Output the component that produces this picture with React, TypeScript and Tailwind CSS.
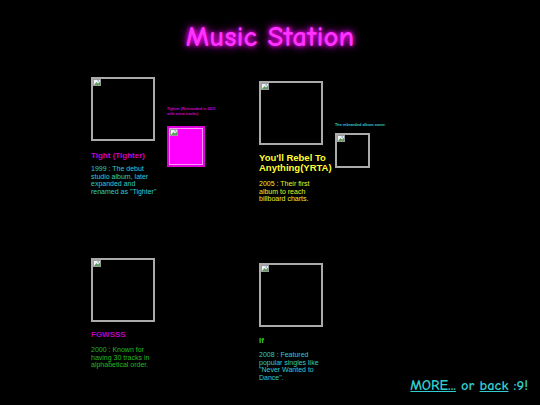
import React from "react";

const comic = { fontFamily: '"Comic Sans MS", "Comic Neue", cursive' };

function Broken() {
  return (
    <svg width="8" height="7" viewBox="0 0 8 7" className="absolute left-0 top-0">
      <rect x="0.5" y="0.5" width="7" height="6" fill="#f2f2f2" stroke="#9a9a9a" strokeWidth="1" />
      <path d="M1 6 L3.5 3 L5 4.5 L7 2.5 L7 6 Z" fill="#5aa05a" />
      <rect x="4.5" y="1.2" width="1.6" height="1.4" fill="#7aa8d8" />
    </svg>
  );
}

function Cover({ size }: { size: string }) {
  return (
    <div className={`relative border-2 border-[#ababab] bg-black ${size}`}>
      <Broken />
    </div>
  );
}

type Album = {
  title: string;
  titleClass: string;
  desc: string;
  descClass: string;
  gapClass: string;
  descGapClass: string;
};

function AlbumCol({ a }: { a: Album }) {
  return (
    <div className="w-[70px] shrink-0">
      <Cover size="h-[64px] w-[64px]" />
      <h3 className={`font-bold ${a.titleClass} ${a.gapClass}`}>{a.title}</h3>
      <p className={`text-[7px] leading-[7.7px] ${a.descClass} ${a.descGapClass}`}>{a.desc}</p>
    </div>
  );
}

export default function App() {
  return (
    <div
      className="min-h-[405px] w-[540px] bg-black"
      style={{ fontFamily: '"Liberation Sans", Arial, sans-serif' }}
    >
      <h1
        className="pt-[21px] text-center text-[29px] font-bold leading-[32px] text-[#ff33ff] [text-shadow:0_0_4px_#ff00ff,0_0_10px_#ff00ff]"
        style={comic}
      >
        Music Station
      </h1>

      <div className="mt-[24px] pl-[91px]">
        {/* row 1 */}
        <div className="flex h-[181px] items-start">
          <div className="flex w-[168px] shrink-0 items-start gap-[6px]">
            <AlbumCol
              a={{
                title: "Tight (Tighter)",
                titleClass: "text-[8px] leading-[9px] text-[#cc00cc]",
                desc: '1999 : The debut studio album, later expanded and renamed as "Tighter"',
                descClass: "text-[#33cccc]",
                gapClass: "mt-[10px]",
                descGapClass: "mt-[5px]",
              }}
            />
            <div className="mt-[30px] w-[53px] shrink-0">
              <p className="text-[3.8px] font-bold leading-[5px] text-[#cc00cc]">
                Tighter (Rebranded in 2011 with extra tracks)
              </p>
              <div className="mt-[9px] h-[41px] w-[38px] border-2 border-[#dd00dd] bg-[#ff00ff]">
                <div className="relative h-full w-full border border-[#ff99ff]">
                  <Broken />
                </div>
              </div>
            </div>
          </div>

          <div className="mt-[4px] flex w-[168px] shrink-0 items-start gap-[6px]">
            <AlbumCol
              a={{
                title: "You'll Rebel To Anything(YRTA)",
                titleClass: "text-[9.5px] leading-[9.5px] text-[#ffff33]",
                desc: "2005 : Their first album to reach billboard charts.",
                descClass: "text-[#eeee22]",
                gapClass: "mt-[8px]",
                descGapClass: "mt-[8px]",
              }}
            />
            <div className="mt-[42px] shrink-0">
              <p className="whitespace-nowrap text-[3.8px] font-bold leading-[5px] text-[#33cccc]">
                The rebranded album cover.
              </p>
              <div className="mt-[5px]">
                <Cover size="h-[35px] w-[35px]" />
              </div>
            </div>
          </div>
        </div>

        {/* row 2 */}
        <div className="flex h-[136px] items-start">
          <div className="w-[168px] shrink-0">
            <AlbumCol
              a={{
                title: "FGWSSS",
                titleClass: "text-[8px] leading-[9px] text-[#bb00bb]",
                desc: "2000 : Known for having 30 tracks in alphabetical order.",
                descClass: "text-[#22bb22]",
                gapClass: "mt-[8px]",
                descGapClass: "mt-[7px]",
              }}
            />
          </div>
          <div className="mt-[5px] shrink-0">
            <AlbumCol
              a={{
                title: "If",
                titleClass: "text-[8px] leading-[9px] text-[#33cc22]",
                desc: '2008 : Featured popular singles like "Never Wanted to Dance".',
                descClass: "text-[#33cccc]",
                gapClass: "mt-[9px]",
                descGapClass: "mt-[6px]",
              }}
            />
          </div>
          <div
            className="ml-auto mr-[12px] self-end whitespace-nowrap text-[14.5px] font-bold leading-[17px] text-[#33cccc]"
            style={comic}
          >
            <a href="#" className="underline">MORE...</a> or <a href="#" className="underline">back</a> :9!
          </div>
        </div>
      </div>
    </div>
  );
}
